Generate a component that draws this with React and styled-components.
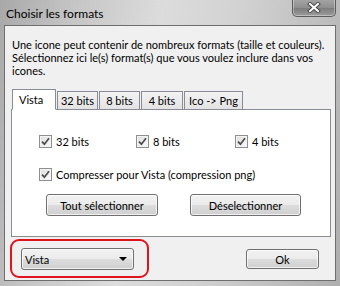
import React from 'react';
import styled, { createGlobalStyle } from 'styled-components';

const GlobalStyle = createGlobalStyle`
  html, body {
    margin: 0;
    padding: 0;
    background: #ffffff;
  }
  body {
    font-family: Lato, 'Liberation Sans', sans-serif;
    font-size: 11px;
    color: #000;
  }
`;

const tabs = [
  { label: 'Vista', width: 44, active: true },
  { label: '32 bits', width: 41 },
  { label: '8 bits', width: 41 },
  { label: '4 bits', width: 42 },
  { label: 'Ico -> Png', width: 59 },
];

const CheckIcon = () => (
  <svg width="9" height="9" viewBox="0 0 9 9">
    <path d="M1 4.6 L3.4 7.2 L8 1.2" fill="none" stroke="#4c4c4c" strokeWidth="1.7" />
  </svg>
);

const Check = ({ children }) => (
  <CheckItem>
    <Box><CheckIcon /></Box>
    <span>{children}</span>
  </CheckItem>
);

const App = () => {
  return (
    <>
      <GlobalStyle />
      <Window>
        <TitleBar>
          <Title>Choisir les formats</Title>
          <CloseButton>
            <svg width="14" height="11" viewBox="0 0 14 11">
              <path d="M3 2 L11 9 M11 2 L3 9" stroke="#4a4a4a" strokeWidth="4" strokeLinecap="square" />
              <path d="M3 2 L11 9 M11 2 L3 9" stroke="#ffffff" strokeWidth="2" strokeLinecap="square" />
            </svg>
          </CloseButton>
        </TitleBar>

        <Client>
          <Intro>
            Une icone peut contenir de nombreux formats (taille et couleurs).<br />
            Sélectionnez ici le(s) format(s) que vous voulez inclure dans vos<br />
            icones.
          </Intro>

          <TabRow>
            {tabs.map((tab) => (
              <Tab key={tab.label} $active={tab.active} $width={tab.width}>
                {tab.label}
              </Tab>
            ))}
          </TabRow>

          <Panel>
            <CheckGrid>
              <Check>32 bits</Check>
              <Check>8 bits</Check>
              <Check>4 bits</Check>
            </CheckGrid>
            <CheckLine>
              <Check>Compresser pour Vista (compression png)</Check>
            </CheckLine>
            <ButtonRow>
              <Button $width={112}>Tout sélectionner</Button>
              <Button $width={111}>Déselectionner</Button>
            </ButtonRow>
          </Panel>

          <Footer>
            <Highlight>
              <Combo>
                <span>Vista</span>
                <Arrow />
              </Combo>
            </Highlight>
            <OkButton>Ok</OkButton>
          </Footer>
        </Client>
      </Window>
    </>
  );
};

export default App;

const Window = styled.div`
  width: 340px;
  height: 286px;
  box-sizing: border-box;
  display: flex;
  flex-direction: column;
  padding: 0 4px 5px;
  background: linear-gradient(100deg, #a8a8a8 0%, #c4c4c4 18%, #dcdcdc 42%, #d2d2d2 62%, #c0c0c0 82%, #aeaeae 100%);
`;

const TitleBar = styled.div`
  height: 25px;
  display: flex;
  align-items: flex-start;
  justify-content: space-between;
`;

const Title = styled.div`
  margin: 6px 0 0 2px;
  font-size: 12px;
  line-height: 15px;
  color: #000;
`;

const CloseButton = styled.div`
  width: 44px;
  height: 18px;
  margin-top: -1px;
  box-sizing: border-box;
  display: flex;
  align-items: center;
  justify-content: center;
  border: 1px solid #5c5c5c;
  border-top: none;
  border-radius: 0 0 5px 5px;
  background: linear-gradient(#a6a6a6 0%, #8f8f8f 50%, #7a7a7a 51%, #9c9c9c 100%);
  box-shadow: inset 0 0 0 1px rgba(255, 255, 255, 0.35);
`;

const Client = styled.div`
  flex: 1;
  display: flex;
  flex-direction: column;
  border: 1px solid #6e6e6e;
  background: #f0f0f0;
  padding: 0 4px 0 6px;
`;

const Intro = styled.div`
  margin: 12px 0 0 1px;
  line-height: 13px;
  white-space: nowrap;
`;

const TabRow = styled.div`
  display: flex;
  align-items: flex-end;
  gap: 1px;
  margin: 11px 0 0 1px;
  height: 21px;
  position: relative;
  z-index: 1;
`;

const Tab = styled.div`
  width: ${(p) => p.$width}px;
  height: ${(p) => (p.$active ? 21 : 18)}px;
  box-sizing: border-box;
  border: 1px solid #898c95;
  border-bottom: ${(p) => (p.$active ? '1px solid #ffffff' : 'none')};
  background: ${(p) => (p.$active ? '#ffffff' : 'linear-gradient(#f3f3f3, #e3e3e3)')};
  display: flex;
  justify-content: ${(p) => (p.$active ? 'flex-start' : 'center')};
  padding: ${(p) => (p.$active ? '2px 0 0 6px' : '1px 0 0')};
  line-height: 15px;
  white-space: nowrap;
  margin-bottom: ${(p) => (p.$active ? -1 : 0)}px;
`;

const Panel = styled.div`
  height: 128px;
  box-sizing: border-box;
  border: 1px solid #898c95;
  background: #ffffff;
  padding: 24px 0 0 27px;
`;

const CheckGrid = styled.div`
  display: grid;
  grid-template-columns: 97px 99px auto;
  height: 15px;
`;

const CheckLine = styled.div`
  margin-top: 18px;
  height: 15px;
`;

const CheckItem = styled.div`
  display: flex;
  align-items: center;
  gap: 4px;
  line-height: 15px;
  white-space: nowrap;
`;

const Box = styled.div`
  width: 13px;
  height: 13px;
  box-sizing: border-box;
  border: 1px solid #8e8f8f;
  background: linear-gradient(135deg, #dcdcdc, #fbfbfb);
  box-shadow: inset 0 0 0 1px #f4f4f4;
  display: flex;
  align-items: center;
  justify-content: center;
`;

const ButtonRow = styled.div`
  display: flex;
  gap: 32px;
  margin: 12px 0 0 7px;
`;

const Button = styled.div`
  width: ${(p) => p.$width}px;
  height: 22px;
  box-sizing: border-box;
  border: 1px solid #707070;
  border-radius: 3px;
  background: linear-gradient(#f2f2f2 0%, #ebebeb 49%, #dddddd 50%, #cfcfcf 100%);
  box-shadow: inset 0 0 0 1px rgba(255, 255, 255, 0.7);
  display: flex;
  align-items: center;
  justify-content: center;
  white-space: nowrap;
`;

const Footer = styled.div`
  display: flex;
  align-items: flex-start;
  justify-content: space-between;
  margin: 2px 12px 0 -1px;
`;

const Highlight = styled.div`
  width: 139px;
  height: 39px;
  box-sizing: border-box;
  border: 2px solid #e0141c;
  border-radius: 9px;
  padding: 7px 0 0 9px;
`;

const Combo = styled.div`
  width: 113px;
  height: 22px;
  box-sizing: border-box;
  border: 1px solid #707070;
  border-radius: 3px;
  background: linear-gradient(#f2f2f2 0%, #ebebeb 49%, #dddddd 50%, #cfcfcf 100%);
  box-shadow: inset 0 0 0 1px rgba(255, 255, 255, 0.7);
  display: flex;
  align-items: center;
  justify-content: space-between;
  padding: 0 6px 0 3px;
`;

const Arrow = styled.div`
  width: 0;
  height: 0;
  border-left: 4px solid transparent;
  border-right: 4px solid transparent;
  border-top: 4px solid #000;
`;

const OkButton = styled(Button)`
  width: 73px;
  height: 20px;
  margin-top: 10px;
`;
